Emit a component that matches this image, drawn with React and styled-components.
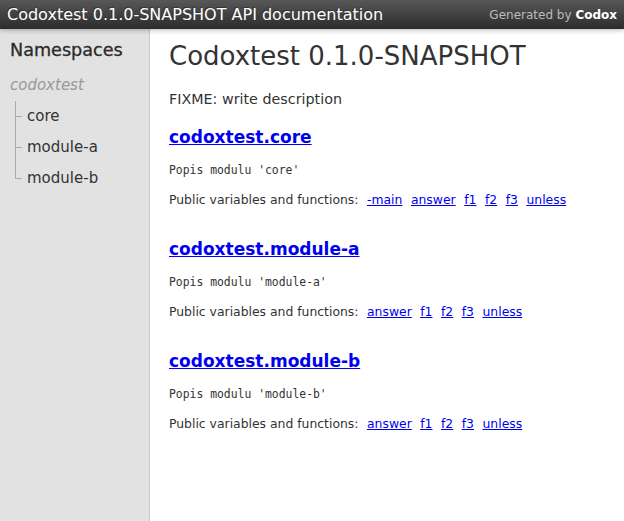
import styled, { createGlobalStyle } from "styled-components";

const GlobalStyle = createGlobalStyle`
  html, body {
    margin: 0;
    padding: 0;
    height: 100%;
  }
  body {
    font-family: "DejaVu Sans", Verdana, sans-serif;
    font-size: 15px;
    color: #333;
    background: #fff;
  }
`;

const namespaces = [
  {
    name: "codoxtest.core",
    doc: "Popis modulu 'core'",
    vars: ["-main", "answer", "f1", "f2", "f3", "unless"],
  },
  {
    name: "codoxtest.module-a",
    doc: "Popis modulu 'module-a'",
    vars: ["answer", "f1", "f2", "f3", "unless"],
  },
  {
    name: "codoxtest.module-b",
    doc: "Popis modulu 'module-b'",
    vars: ["answer", "f1", "f2", "f3", "unless"],
  },
];

const App = () => {
  return (
    <Page>
      <GlobalStyle />
      <Header>
        <Title>Codoxtest 0.1.0-SNAPSHOT API documentation</Title>
        <Generated>
          Generated by <strong>Codox</strong>
        </Generated>
      </Header>
      <Body>
        <Sidebar>
          <SideTitle>Namespaces</SideTitle>
          <Root>codoxtest</Root>
          <Tree>
            {["core", "module-a", "module-b"].map((n, i, arr) => (
              <TreeItem key={n} last={i === arr.length - 1}>
                {n}
              </TreeItem>
            ))}
          </Tree>
        </Sidebar>
        <Content>
          <PageTitle>Codoxtest 0.1.0-SNAPSHOT</PageTitle>
          <Description>FIXME: write description</Description>
          {namespaces.map((ns, i) => (
            <Namespace key={ns.name} first={i === 0}>
              <NsTitle>
                <a href="#">{ns.name}</a>
              </NsTitle>
              <Doc>{ns.doc}</Doc>
              <Index>
                Public variables and functions:
                {ns.vars.map((v) => (
                  <VarLink key={v} href="#">
                    {v}
                  </VarLink>
                ))}
              </Index>
            </Namespace>
          ))}
        </Content>
      </Body>
    </Page>
  );
};
export default App;

const Page = styled.div`
  display: flex;
  flex-direction: column;
  height: 100vh;
  overflow: hidden;
`;

const Header = styled.div`
  height: 29px;
  flex: none;
  display: flex;
  align-items: center;
  justify-content: space-between;
  background: linear-gradient(#575757, #2c2c2c);
  box-shadow: 0 0 6px rgba(0, 0, 0, 0.4);
  position: relative;
  z-index: 2;
  padding: 0 7px;
`;

const Title = styled.h1`
  margin: 0;
  font-size: 16px;
  font-weight: normal;
  color: #fff;
  text-shadow: -1px -1px 0 #333;
`;

const Generated = styled.div`
  font-size: 12px;
  color: #bbb;
  strong {
    color: #fff;
    font-weight: bold;
  }
`;

const Body = styled.div`
  flex: 1;
  display: flex;
  min-height: 0;
`;

const Sidebar = styled.div`
  width: 149px;
  flex: none;
  background: #e2e2e2;
  border-right: 1px solid #c8c8c8;
  padding-top: 10px;
`;

const SideTitle = styled.h3`
  margin: 0 0 0 10px;
  font-size: 17.6px;
  font-weight: normal;
  color: #2a2a2a;
  line-height: 22px;
  -webkit-text-stroke: 0.3px #2a2a2a;
`;

const Root = styled.div`
  margin: 14px 0 0 10px;
  font-style: italic;
  color: #999;
  font-size: 15px;
  line-height: 20px;
`;

const Tree = styled.div`
  margin-top: 6px;
  padding-left: 15px;
`;

// tree branch lines drawn with pseudo-elements
const TreeItem = styled.div`
  position: relative;
  height: 31px;
  line-height: 20px;
  padding: 5px 0 0 12px;
  box-sizing: border-box;
  font-size: 15px;
  color: #333;
  &::before {
    content: "";
    position: absolute;
    left: 0;
    top: 0;
    height: ${(p) => (p.last ? "16px" : "31px")};
    border-left: 1px solid #aaa;
  }
  &::after {
    content: "";
    position: absolute;
    left: 0;
    top: 15px;
    width: 7px;
    border-top: 1px solid #aaa;
  }
`;

const Content = styled.div`
  flex: 1;
  padding: 0 19px;
  overflow: hidden;
`;

const PageTitle = styled.h1`
  margin: 10px 0 0;
  font-size: 26px;
  font-weight: normal;
  line-height: 34px;
  color: #333;
`;

const Description = styled.p`
  margin: 16px 0 0;
  font-size: 14.3px;
  line-height: 20px;
`;

const Namespace = styled.div`
  padding-top: ${(p) => (p.first ? "17px" : "29px")};
`;

const NsTitle = styled.h2`
  margin: 0;
  font-size: 17px;
  line-height: 22px;
  font-weight: bold;
  a {
    color: #00e;
  }
`;

const Doc = styled.pre`
  margin: 14px 0 0;
  font-family: "DejaVu Sans Mono", monospace;
  font-size: 11.4px;
  line-height: 16px;
`;

const Index = styled.div`
  margin-top: 13px;
  font-size: 12.4px;
  line-height: 18px;
`;

const VarLink = styled.a`
  color: #00e;
  margin-left: 8.5px;
`;
